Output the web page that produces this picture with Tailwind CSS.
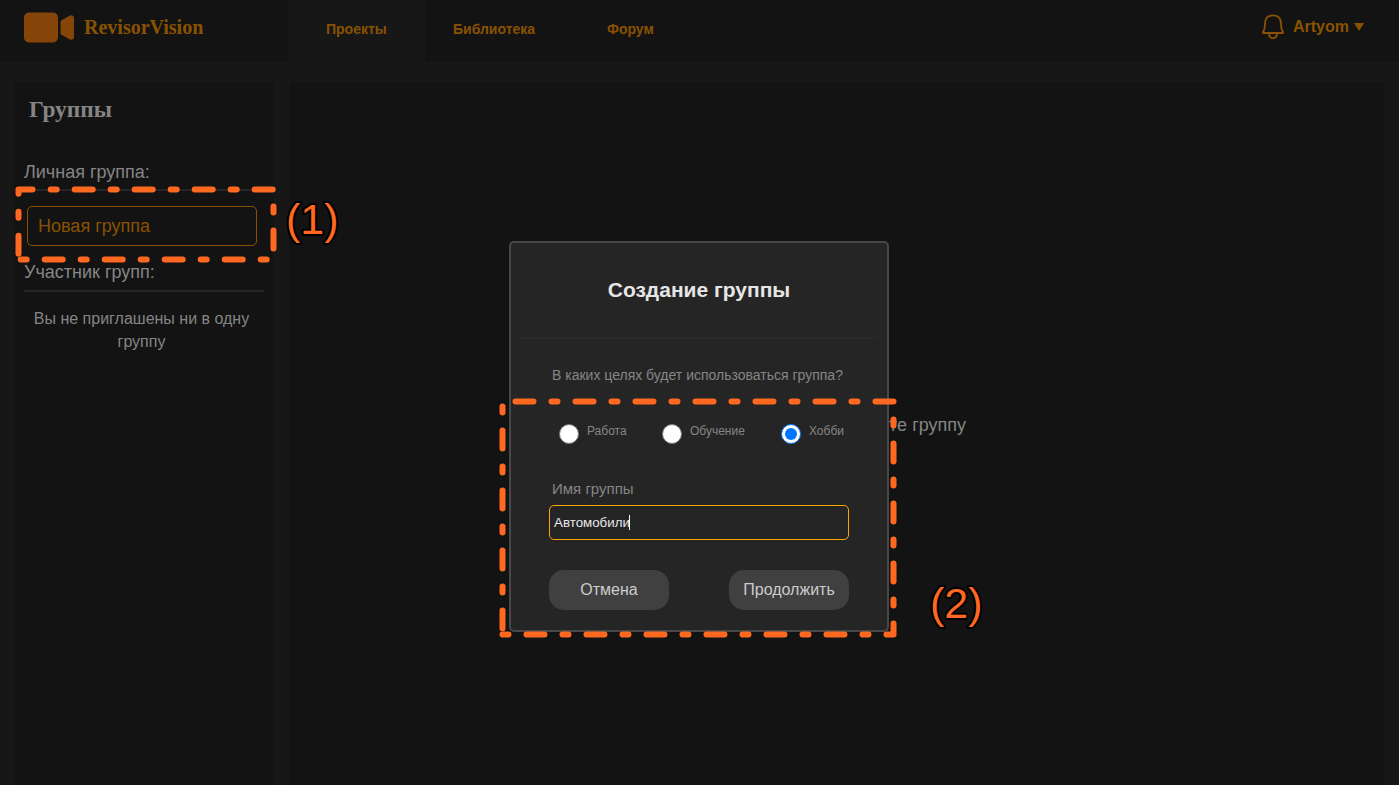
<!DOCTYPE html>
<html lang="ru">
<head>
<meta charset="utf-8">
<title>RevisorVision</title>
<script src="https://cdn.jsdelivr.net/npm/@tailwindcss/browser@4"></script>
</head>
<body class="relative flex h-[785px] w-[1399px] flex-col overflow-hidden bg-[#171717] font-['Liberation_Sans',Arial,sans-serif] text-[#858585]">
  <header class="flex h-[62px] shrink-0 bg-[#131313] font-bold text-[#8a5200]">
    <div class="flex w-[288px] items-start pl-6 pt-3">
      <svg class="h-[31px] w-[50px]" viewBox="0 -0.5 50 31" fill="#854509"><rect width="34" height="30" rx="5"/><path d="M36.500 9.300Q36.500 8.300 37.500 7.700L45.500 3.300Q47 2.500 48.500 3Q50 3.600 50 5.500V24.500Q50 26.400 48.500 27Q47 27.500 45.500 26.700L37.500 22.300Q36.500 21.700 36.500 20.700Z"/></svg>
      <span class="ml-[10px] mt-[3px] font-['Liberation_Serif',serif] text-[20px] leading-6">RevisorVision</span>
    </div>
    <nav class="flex text-[14px] leading-[18px]">
      <a class="w-[137px] bg-[#171717] pl-[38px] pt-5">Проекты</a>
      <a class="w-[154px] pl-7 pt-5">Библиотека</a>
      <a class="w-[100px] pl-7 pt-5">Форум</a>
    </nav>
    <div class="ml-auto flex pr-[35px] pt-[14px]">
      <svg class="-mt-px h-[26px] w-6" viewBox="0 0 24 26" fill="none" stroke="#8a5200" stroke-width="1.800" stroke-linejoin="round"><path d="M2 20V18.800C3.700 17.500 3.800 15 4 10.500C4.200 5 7.500 2.300 12 2.300S19.800 5 20 10.500C20.200 15 20.300 17.500 22 18.800V20Z"/><path d="M8 20.300C8 26.800 16 26.800 16 20.300"/></svg>
      <span class="ml-2 mt-[3px] text-base leading-5">Artyom</span>
      <svg class="ml-[5px] mt-[9px] h-2 w-[10px]" viewBox="0 0 10 8" fill="#8a5200"><path d="M0 0H10L5 8Z"/></svg>
    </div>
  </header>
  <main class="flex min-h-0 flex-1 gap-[15px] pl-[14px] pr-[15px] pt-5">
    <aside class="w-[260px] shrink-0 rounded-t-[5px] bg-[#131313] px-[10px]">
      <h1 class="ml-[5px] mt-[13px] font-['Liberation_Serif',serif] text-[23.400px] font-bold leading-7">Группы</h1>
      <h2 class="mt-[38px] h-[30px] border-b-2 border-[#252525] text-[18px] leading-[22px]">Личная группа:</h2>
      <button class="ml-[3px] mt-[15px] block h-10 w-[230px] rounded-[5px] border border-[#8a5200] pl-[10px] text-left text-[18px] text-[#8a5200]">Новая группа</button>
      <h2 class="mt-[15px] h-[31px] border-b-2 border-[#252525] text-[18px] leading-[22px]">Участник групп:</h2>
      <p class="mt-[15px] pr-[5px] text-center text-base leading-[23px]">Вы не приглашены ни в одну группу</p>
    </aside>
    <section class="flex flex-1 justify-end rounded-t-[5px] bg-[#131313] pr-[418px] pt-[332px] text-[18px] leading-[22px]"><p>те группу</p></section>
  </main>

  <div class="absolute left-[509px] top-[241px] flex h-[391px] w-[380px] flex-col rounded-[5px] border-2 border-[#484848] bg-[#252525]">
    <h3 class="mx-[10px] h-24 border-b-2 border-[#2a2a2a] pt-[34px] text-center text-[21px] font-bold leading-[26px] text-[#e6e6e6]">Создание группы</h3>
    <p class="ml-[41px] mt-[27px] text-[14px] leading-[18px]">В каких целях будет использоваться группа?</p>
    <div class="ml-12 mt-[40px] flex h-5 text-[12px] leading-[14px]">
      <div class="flex w-[103px]"><span class="mr-2 h-5 w-5 rounded-full border border-[#767676] bg-white"></span><span>Работа</span></div>
      <div class="flex w-[119px]"><span class="mr-2 h-5 w-5 rounded-full border border-[#767676] bg-white"></span><span>Обучение</span></div>
      <div class="flex"><span class="mr-2 flex h-5 w-5 items-center justify-center rounded-full border border-[#0075ff] bg-white"><span class="h-3 w-3 rounded-full bg-[#0075ff]"></span></span><span>Хобби</span></div>
    </div>
    <label class="ml-[41px] mt-9 text-[15px] leading-[18px]">Имя группы</label>
    <div class="ml-[38px] mt-[7px] flex h-[35px] w-[300px] items-center rounded-[5px] border border-[#ffa500] pl-1 text-[13.333px] text-[#e8e8e8]">Автомобили<span class="-ml-px h-[15px] w-px bg-white"></span></div>
    <div class="ml-[38px] mt-[30px] flex w-[300px] justify-between text-base text-[#cccccc]">
      <button class="h-10 w-[120px] rounded-[15px] bg-[#404040]">Отмена</button>
      <button class="h-10 w-[120px] rounded-[15px] bg-[#404040]">Продолжить</button>
    </div>
  </div>

  <!-- Step annotations over the page -->
  <svg class="absolute left-0 top-0 h-[785px] w-[1399px]" viewBox="0 0 1399 785" fill="none" stroke="#ff6820" stroke-width="6" stroke-linecap="round" stroke-linejoin="round">
    <path d="M18.500 193.700V189.500H32.500"/>
    <g stroke-dasharray="6 18 18 18">
      <path d="M50.700 189.500H272.700"/>
      <path d="M18.500 211.700V253.700"/>
      <path d="M273.500 206.500V248.500"/>
      <path d="M20.700 259.500H266.700"/>
      <path d="M502.500 406.500V628.500"/>
      <path d="M502.500 634.500H868.500"/>
      <path d="M893.500 419.500V605.500"/>
    </g>
    <path stroke-dasharray="18 18 6 18" d="M515.500 401.500H893.500"/>
    <path d="M886.500 634.500H893.500V623.500"/>
    <g class="font-['Liberation_Sans',Arial,sans-serif] text-[43px]" fill="#ff6820" stroke="#000" stroke-width="4" paint-order="stroke">
      <text x="286" y="234">(1)</text>
      <text x="930" y="618">(2)</text>
    </g>
  </svg>
</body>
</html>
